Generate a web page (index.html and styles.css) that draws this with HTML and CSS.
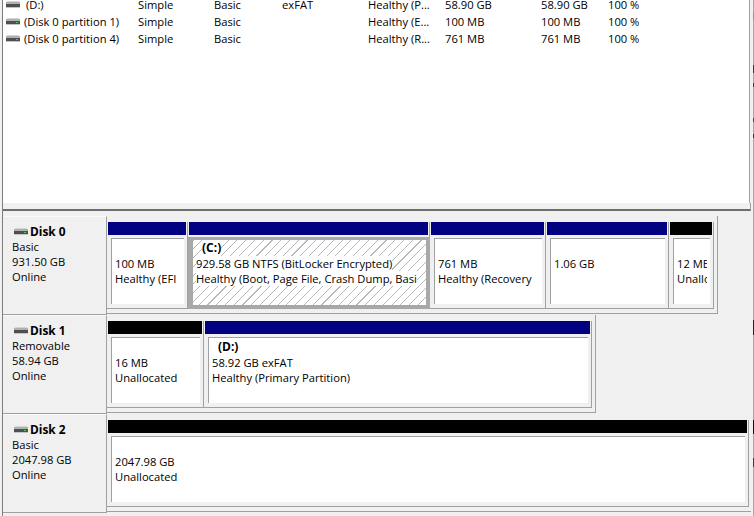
FILE: index.html
```html
<!DOCTYPE html>
<html lang="en">
<head>
<meta charset="utf-8">
<title>Disk Management</title>
<link rel="stylesheet" href="styles.css">
</head>
<body>
<svg class="defs" width="0" height="0" aria-hidden="true">
  <symbol id="hdd" viewBox="0 0 14 8">
    <rect x="1" y="0" width="12" height="1" fill="#d4d4d4"/>
    <rect x="0" y="1" width="14" height="2" fill="#b0b0b0"/>
    <rect x="0" y="3" width="14" height="3" fill="#4f4f4f"/>
    <rect x="0" y="6" width="14" height="1" fill="#c4c4c4"/>
    <rect x="10" y="4" width="2" height="1" fill="#35d24a"/>
  </symbol>
  <symbol id="hdd-off" viewBox="0 0 14 8">
    <rect x="1" y="0" width="12" height="1" fill="#d4d4d4"/>
    <rect x="0" y="1" width="14" height="2" fill="#b0b0b0"/>
    <rect x="0" y="3" width="14" height="3" fill="#4f4f4f"/>
    <rect x="0" y="6" width="14" height="1" fill="#c4c4c4"/>
  </symbol>
</svg>
<div class="app">
  <div class="list">
    <div class="rows">
      <div class="row">
        <span class="c-name name-d"><svg class="ico"><use href="#hdd-off"/></svg><span class="lbl">(D:)</span></span>
        <span>Simple</span><span>Basic</span><span>exFAT</span><span class="clip">Healthy (P...</span><span>58.90 GB</span><span>58.90 GB</span><span>100 %</span>
      </div>
      <div class="row">
        <span class="c-name"><svg class="ico"><use href="#hdd"/></svg><span class="lbl">(Disk 0 partition 1)</span></span>
        <span>Simple</span><span>Basic</span><span></span><span class="clip">Healthy (E...</span><span>100 MB</span><span>100 MB</span><span>100 %</span>
      </div>
      <div class="row">
        <span class="c-name"><svg class="ico"><use href="#hdd"/></svg><span class="lbl">(Disk 0 partition 4)</span></span>
        <span>Simple</span><span>Basic</span><span></span><span class="clip">Healthy (R...</span><span>761 MB</span><span>761 MB</span><span>100 %</span>
      </div>
    </div>
  </div>
  <div class="splitter"></div>
  <div class="disks">

    <div class="disk">
      <div class="info">
        <div class="info-head"><svg class="ico"><use href="#hdd"/></svg><b>Disk 0</b></div>
        <div>Basic</div><div>931.50 GB</div><div>Online</div>
      </div>
      <div class="vols">
        <div class="cell w-efi">
          <div class="bar blue"></div>
          <div class="box"><div class="title"></div><div class="line">100 MB</div><div class="line">Healthy (EFI</div></div>
        </div>
        <div class="cell w-c">
          <div class="bar blue"></div>
          <div class="box sel"><div class="title"><span>(C:)</span></div><div class="line"><span>929.58 GB NTFS (BitLocker Encrypted)</span></div><div class="line"><span>Healthy (Boot, Page File, Crash Dump, Basi</span></div></div>
        </div>
        <div class="cell w-rec">
          <div class="bar blue"></div>
          <div class="box"><div class="title"></div><div class="line">761 MB</div><div class="line">Healthy (Recovery</div></div>
        </div>
        <div class="cell w-gb">
          <div class="bar blue"></div>
          <div class="box"><div class="title"></div><div class="line">1.06 GB</div></div>
        </div>
        <div class="cell w-12">
          <div class="bar black"></div>
          <div class="box"><div class="title"></div><div class="line">12 MB</div><div class="line">Unallocated</div></div>
        </div>
      </div>
    </div>

    <div class="disk">
      <div class="info">
        <div class="info-head"><svg class="ico"><use href="#hdd-off"/></svg><b>Disk 1</b></div>
        <div>Removable</div><div>58.94 GB</div><div>Online</div>
      </div>
      <div class="vols">
        <div class="cell w-16">
          <div class="bar black"></div>
          <div class="box"><div class="title"></div><div class="line">16 MB</div><div class="line">Unallocated</div></div>
        </div>
        <div class="cell w-d">
          <div class="bar blue"></div>
          <div class="box"><div class="title"><span>(D:)</span></div><div class="line">58.92 GB exFAT</div><div class="line">Healthy (Primary Partition)</div></div>
        </div>
      </div>
    </div>

    <div class="disk">
      <div class="info">
        <div class="info-head"><svg class="ico"><use href="#hdd"/></svg><b>Disk 2</b></div>
        <div>Basic</div><div>2047.98 GB</div><div>Online</div>
      </div>
      <div class="vols">
        <div class="cell w-2t">
          <div class="bar black"></div>
          <div class="box"><div class="title"></div><div class="line">2047.98 GB</div><div class="line">Unallocated</div></div>
        </div>
      </div>
    </div>

  </div>
</div>
<div class="edge"></div>
</body>
</html>
```

FILE: styles.css
```css
* { box-sizing: border-box; }
html, body { margin: 0; padding: 0; }
body {
  display: flex;
  width: 754px;
  height: 516px;
  overflow: hidden;
  background: #f0f0f0;
  font-family: "Open Sans", "Noto Sans", sans-serif;
  font-size: 11.2px;
  line-height: 15px;
  color: #000;
}
.defs { display: block; height: 0; flex: none; }
.app {
  margin-left: 2px;
  width: 749px;
  height: 516px;
  flex: none;
  border-left: 1px solid #7d7d7d;
  display: flex;
  flex-direction: column;
  overflow: hidden;
}
.edge {
  width: 1px;
  height: 516px;
  flex: none;
  margin-left: 2px;
  background: linear-gradient(to bottom,
    #a8a8a8 0, #a8a8a8 12px, #7a9cb0 12px, #7a9cb0 20px, #a8a8a8 20px,
    #a8a8a8 65px, #5a2a40 65px, #5a2a40 73px, #a8a8a8 73px,
    #a8a8a8 83px, #3a3a4a 83px, #3a3a4a 87px, #a8a8a8 87px,
    #a8a8a8 118px, #5a3a50 118px, #5a3a50 122px, #a8a8a8 122px,
    #a8a8a8 134px, #3a3050 134px, #3a3050 138px, #a8a8a8 138px,
    #a8a8a8 320px, #1a1a70 320px, #1a1a70 335px, #a8a8a8 335px,
    #a8a8a8 420px, #111 420px, #111 434px, #a8a8a8 434px,
    #a8a8a8 458px, #5a2a40 458px, #5a2a40 467px, #a8a8a8 467px);
}
.list {
  height: 203px;
  flex: none;
  background: #fff;
  border-right: 1px solid #a0a0a0;
  width: 747px;
  overflow: hidden;
}
.rows { margin-top: -4px; }
.row {
  display: grid;
  grid-template-columns: 135px 76px 68px 86px 77px 96px 67px 1fr;
  height: 17px;
  line-height: 17px;
  white-space: nowrap;
}
.clip { overflow: hidden; }
.c-name { display: flex; align-items: center; padding-left: 3px; }
.lbl { margin-left: 4px; }
.name-d .lbl { margin-left: 6px; }
.ico { width: 14px; height: 8px; flex: none; }
.splitter {
  height: 8px;
  flex: none;
  width: 748px;
  border-bottom: 2px solid #6e6e6e;
  border-right: 1px solid #a0a0a0;
}
.disks {
  margin-top: 5px;
  flex: 1;
  min-height: 0;
  overflow: hidden;
}
.disk {
  display: flex;
  height: 99px;
}
.info {
  width: 104px;
  flex: none;
  padding: 7px 0 0 9px;
  border-top: 1px solid #fafafa;
  border-right: 1px solid #a0a0a0;
  border-bottom: 1px solid #a0a0a0;
}
.info-head {
  display: flex;
  align-items: center;
}
.info-head .ico { margin: 0 2px 0 2px; }
.info-head b { font-weight: 700; font-size: 11.9px; }
.vols {
  display: flex;
  flex: none;
  height: 98px;
  padding: 6px 3px 4px 0;
  border-right: 1px solid #a0a0a0;
  border-bottom: 1px solid #a0a0a0;
}
.cell {
  display: flex;
  flex-direction: column;
  padding: 0 1px;
  border-right: 1px solid #a0a0a0;
  border-bottom: 1px solid #a0a0a0;
}
.w-efi { width: 81px; }
.w-c { width: 242px; }
.w-rec { width: 116px; }
.w-gb { width: 123px; }
.w-12 { width: 45px; }
.w-16 { width: 97px; }
.w-d { width: 388px; }
.w-2t { width: 642px; }
.bar { height: 13px; flex: none; }
.blue { background: #000080; }
.black { background: #000; }
.box {
  flex: 1;
  min-height: 0;
  margin: 3px 2px 4px 3px;
  padding: 1px 3px 0;
  background: #fff;
  border-top: 1px solid #a0a0a0;
  border-left: 1px solid #a0a0a0;
  overflow: hidden;
  white-space: nowrap;
}
.title {
  height: 16px;
  font-weight: 700;
  font-size: 12px;
  padding-left: 6px;
}
.line { overflow: hidden; height: 15px; }
.box.sel {
  margin: 2px -2px -1px -1px;
  border: solid #a8a8a8;
  border-width: 3px 4px 4px 5px;
  padding: 0 3px;
  background: repeating-linear-gradient(135deg, #b8b8b8 0, #b8b8b8 0.8px, #fff 0.8px, #fff 6.2px);
}
.sel span { background: #fff; }
```
